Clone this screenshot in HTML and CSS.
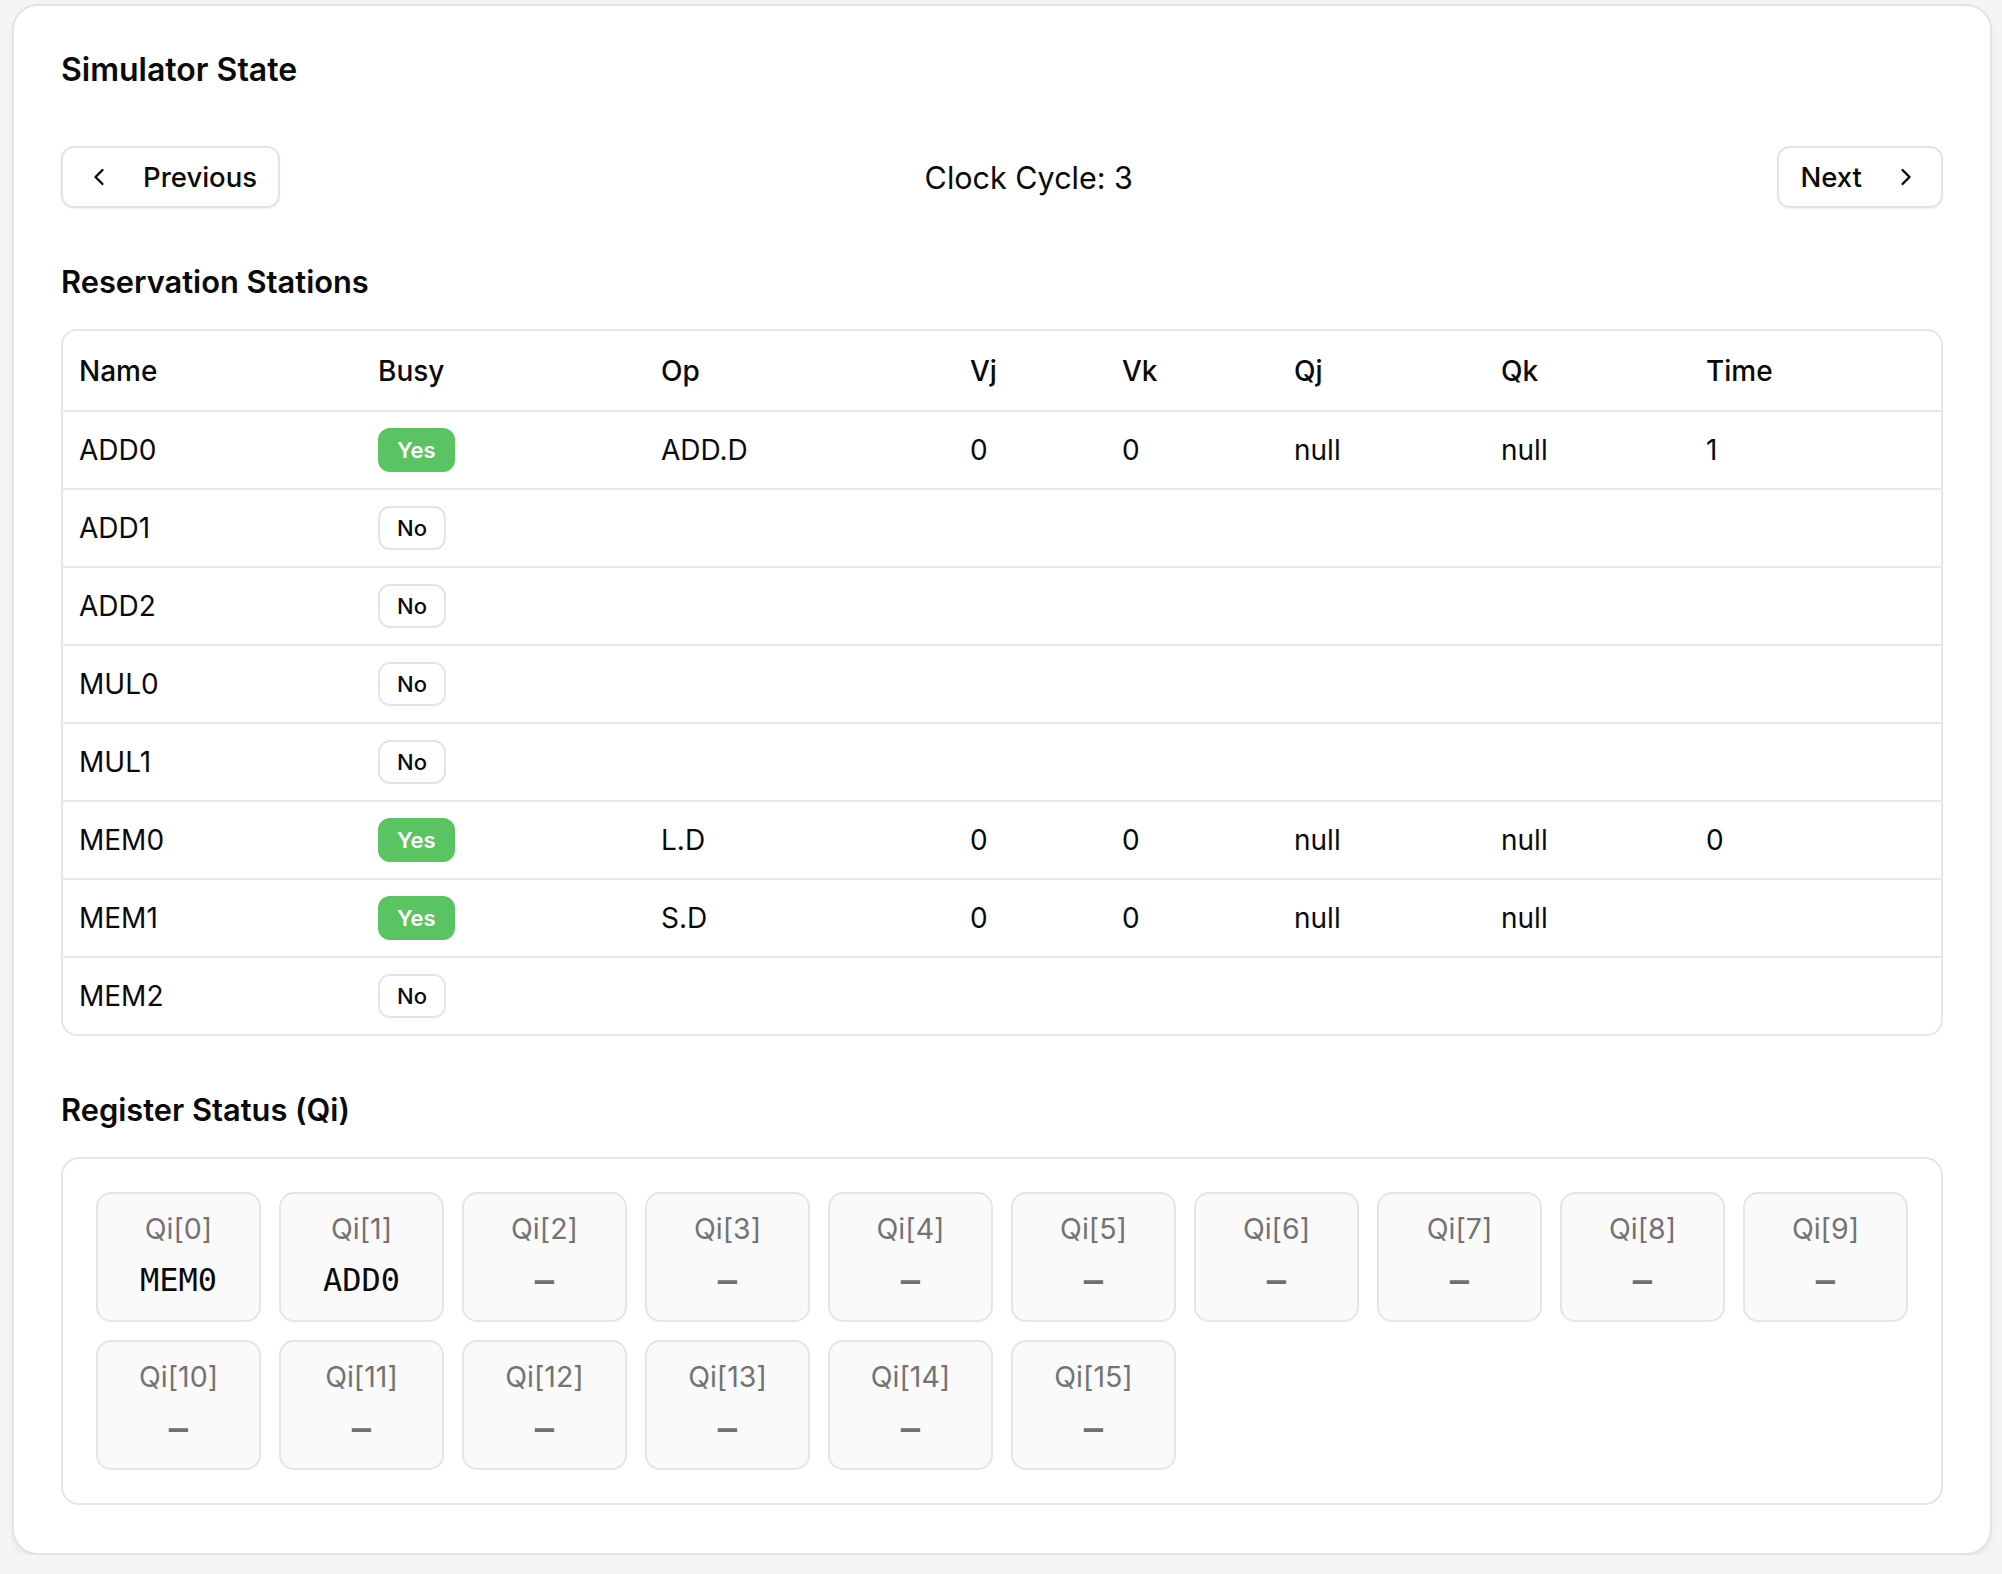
FILE: index.html
```html
<!DOCTYPE html>
<html lang="en">
<head>
<meta charset="utf-8">
<title>Simulator State</title>
<link rel="stylesheet" href="styles.css">
</head>
<body>
<main class="card">
  <h2 class="title">Simulator State</h2>

  <div class="controls">
    <button class="btn btn-prev" type="button">
      <svg class="chev" viewBox="0 0 24 24" fill="none" stroke="currentColor" stroke-width="2" stroke-linecap="round" stroke-linejoin="round"><path d="m15 18-6-6 6-6"/></svg>
      <span>Previous</span>
    </button>
    <div class="clock">Clock Cycle: 3</div>
    <button class="btn btn-next" type="button">
      <span>Next</span>
      <svg class="chev" viewBox="0 0 24 24" fill="none" stroke="currentColor" stroke-width="2" stroke-linecap="round" stroke-linejoin="round"><path d="m9 18 6-6-6-6"/></svg>
    </button>
  </div>

  <h3 class="section">Reservation Stations</h3>
  <div class="table-wrap">
    <table class="rs">
      <thead>
        <tr>
          <th class="c-name">Name</th>
          <th class="c-busy">Busy</th>
          <th class="c-op">Op</th>
          <th class="c-vj">Vj</th>
          <th class="c-vk">Vk</th>
          <th class="c-qj">Qj</th>
          <th class="c-qk">Qk</th>
          <th class="c-time">Time</th>
        </tr>
      </thead>
      <tbody>
        <tr><td>ADD0</td><td><span class="badge yes">Yes</span></td><td>ADD.D</td><td>0</td><td>0</td><td>null</td><td>null</td><td>1</td></tr>
        <tr><td>ADD1</td><td><span class="badge no">No</span></td><td></td><td></td><td></td><td></td><td></td><td></td></tr>
        <tr><td>ADD2</td><td><span class="badge no">No</span></td><td></td><td></td><td></td><td></td><td></td><td></td></tr>
        <tr><td>MUL0</td><td><span class="badge no">No</span></td><td></td><td></td><td></td><td></td><td></td><td></td></tr>
        <tr><td>MUL1</td><td><span class="badge no">No</span></td><td></td><td></td><td></td><td></td><td></td><td></td></tr>
        <tr><td>MEM0</td><td><span class="badge yes">Yes</span></td><td>L.D</td><td>0</td><td>0</td><td>null</td><td>null</td><td>0</td></tr>
        <tr><td>MEM1</td><td><span class="badge yes">Yes</span></td><td>S.D</td><td>0</td><td>0</td><td>null</td><td>null</td><td></td></tr>
        <tr><td>MEM2</td><td><span class="badge no">No</span></td><td></td><td></td><td></td><td></td><td></td><td></td></tr>
      </tbody>
    </table>
  </div>

  <h3 class="section">Register Status (Qi)</h3>
  <div class="reg-panel">
    <div class="reg-grid">
      <div class="reg"><div class="reg-label">Qi[0]</div><div class="reg-val">MEM0</div></div>
      <div class="reg"><div class="reg-label">Qi[1]</div><div class="reg-val">ADD0</div></div>
      <div class="reg"><div class="reg-label">Qi[2]</div><div class="reg-val empty">—</div></div>
      <div class="reg"><div class="reg-label">Qi[3]</div><div class="reg-val empty">—</div></div>
      <div class="reg"><div class="reg-label">Qi[4]</div><div class="reg-val empty">—</div></div>
      <div class="reg"><div class="reg-label">Qi[5]</div><div class="reg-val empty">—</div></div>
      <div class="reg"><div class="reg-label">Qi[6]</div><div class="reg-val empty">—</div></div>
      <div class="reg"><div class="reg-label">Qi[7]</div><div class="reg-val empty">—</div></div>
      <div class="reg"><div class="reg-label">Qi[8]</div><div class="reg-val empty">—</div></div>
      <div class="reg"><div class="reg-label">Qi[9]</div><div class="reg-val empty">—</div></div>
      <div class="reg"><div class="reg-label">Qi[10]</div><div class="reg-val empty">—</div></div>
      <div class="reg"><div class="reg-label">Qi[11]</div><div class="reg-val empty">—</div></div>
      <div class="reg"><div class="reg-label">Qi[12]</div><div class="reg-val empty">—</div></div>
      <div class="reg"><div class="reg-label">Qi[13]</div><div class="reg-val empty">—</div></div>
      <div class="reg"><div class="reg-label">Qi[14]</div><div class="reg-val empty">—</div></div>
      <div class="reg"><div class="reg-label">Qi[15]</div><div class="reg-val empty">—</div></div>
    </div>
  </div>
</main>
</body>
</html>
```

FILE: styles.css
```css
* {
  box-sizing: border-box;
}

html, body {
  margin: 0;
  padding: 0;
}

body {
  background: #f4f5f7;
  font-family: "Inter", "Noto Sans", "Liberation Sans", sans-serif;
  color: #0a0a0a;
  padding: 4px 0 0 12px;
}

.card {
  width: 1980px;
  background: #ffffff;
  border: 2px solid #e3e3e3;
  border-radius: 26px;
  box-shadow: 0 3px 6px rgba(0, 0, 0, 0.06);
  padding: 44px 47px 48px 47px;
}

.title {
  margin: 0;
  font-size: 32px;
  line-height: 40px;
  font-weight: 600;
  letter-spacing: 0;
}

.controls {
  margin-top: 56px;
  height: 62px;
  display: flex;
  align-items: center;
  justify-content: space-between;
}

.btn {
  height: 62px;
  display: flex;
  align-items: center;
  gap: 30px;
  padding: 0 21px;
  background: #ffffff;
  border: 2px solid #e4e4e4;
  border-radius: 13px;
  box-shadow: 0 1px 2px rgba(0, 0, 0, 0.07);
  font-family: inherit;
  font-size: 27.5px;
  font-weight: 500;
  color: #0a0a0a;
}

.btn-prev {
  padding-left: 22px;
}

.chev {
  width: 28px;
  height: 28px;
  flex: none;
}

.clock {
  font-size: 30.5px;
  font-weight: 400;
}

.section {
  margin: 54px 0 0 0;
  font-size: 30.8px;
  line-height: 40px;
  font-weight: 600;
  letter-spacing: 0;
}

.table-wrap {
  margin-top: 27px;
  border: 2px solid #e6e6e6;
  border-radius: 16px;
  overflow: hidden;
}

.rs {
  width: 100%;
  table-layout: fixed;
  border-collapse: separate;
  border-spacing: 0;
  font-size: 28px;
}

.rs th {
  height: 79px;
  padding: 0 16px;
  text-align: left;
  font-weight: 500;
  vertical-align: middle;
}

.rs td {
  height: 78px;
  padding: 0 16px;
  border-top: 2px solid #e8e8e8;
  vertical-align: middle;
  font-weight: 400;
}

.c-name { width: 299px; }
.c-busy { width: 283px; }
.c-op { width: 309px; }
.c-vj { width: 152px; }
.c-vk { width: 172px; }
.c-qj { width: 207px; }
.c-qk { width: 205px; }
.c-time { width: auto; }

.badge {
  display: inline-flex;
  align-items: center;
  justify-content: center;
  height: 44px;
  padding: 0 17px;
  border-radius: 12px;
  font-size: 22px;
  font-weight: 600;
  border: 2px solid transparent;
}

.badge.yes {
  background: #5bc462;
  border-color: #5bc462;
  color: #ffffff;
}

.badge.no {
  background: #ffffff;
  border-color: #e4e4e4;
  color: #0a0a0a;
  font-weight: 500;
}

.reg-panel {
  margin-top: 27px;
  border: 2px solid #e6e6e6;
  border-radius: 18px;
  padding: 33px;
}

.reg-grid {
  display: grid;
  grid-template-columns: repeat(10, 1fr);
  gap: 18px;
}

.reg {
  height: 130px;
  background: #fafafa;
  border: 2px solid #e5e5e5;
  border-radius: 15px;
  display: flex;
  flex-direction: column;
  align-items: center;
  padding-top: 17px;
}

.reg-label {
  font-size: 28.5px;
  line-height: 36px;
  color: #737373;
}

.reg-val {
  margin-top: 11px;
  font-family: "DejaVu Sans Mono", "Liberation Mono", monospace;
  font-size: 32px;
  line-height: 44px;
  color: #0a0a0a;
}

.reg-val.empty {
  color: #707070;
  font-weight: 700;
}
```
